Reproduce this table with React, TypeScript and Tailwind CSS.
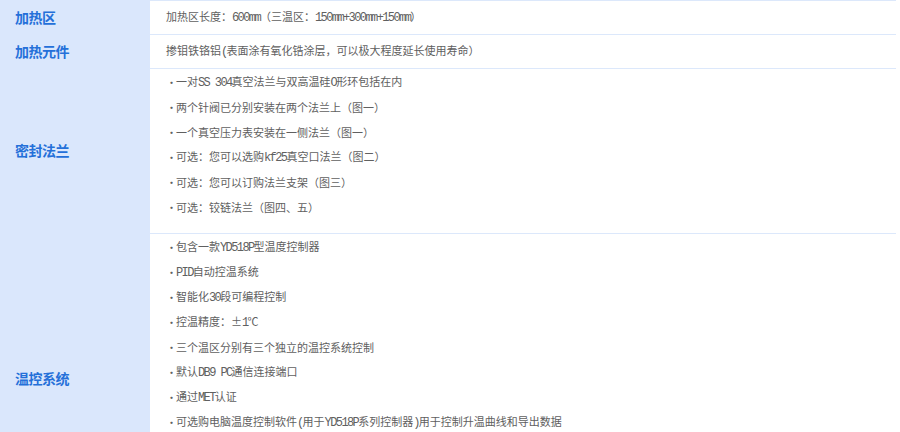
const rows: { label: string; items?: string[]; text?: string; minH?: string }[] = [
  { label: "加热区", text: "加热区长度：600mm（三温区：150mm+300mm+150mm）" },
  { label: "加热元件", text: "掺钼铁铬铝(表面涂有氧化锆涂层，可以极大程度延长使用寿命）" },
  {
    label: "密封法兰",
    items: [
      "一对SS 304真空法兰与双高温硅O形环包括在内",
      "两个针阀已分别安装在两个法兰上（图一）",
      "一个真空压力表安装在一侧法兰（图一）",
      "可选：您可以选购kf25真空口法兰（图二）",
      "可选：您可以订购法兰支架（图三）",
      "可选：铰链法兰（图四、五）",
    ],
  },
  {
    label: "温控系统",
    minH: "min-h-[290px]",
    items: [
      "包含一款YD518P型温度控制器",
      "PID自动控温系统",
      "智能化30段可编程控制",
      "控温精度：±1℃",
      "三个温区分别有三个独立的温控系统控制",
      "默认DB9 PC通信连接端口",
      "通过MET认证",
      "可选购电脑温度控制软件(用于YD518P系列控制器)用于控制升温曲线和导出数据",
    ],
  },
];

// latin runs are half-width in the original, so set them in a mono face
function Txt({ s }: { s: string }) {
  const parts = s.split(/([\x20-\x7e]+)/).filter(Boolean);
  return (
    <span className="leading-none whitespace-nowrap">
      {parts.map((p, i) =>
        /^[\x20-\x7e]+$/.test(p) ? (
          <span key={i} className="font-['Liberation_Mono',monospace] text-[12px] tracking-[-1.6px] whitespace-pre">
            {p}
          </span>
        ) : (
          <span key={i}>{p}</span>
        )
      )}
    </span>
  );
}

export default function App() {
  return (
    <div className="w-[900px] h-[432px] overflow-hidden bg-white font-['Noto_Sans_CJK_SC',sans-serif]">
      <div className="w-[896px]">
        {rows.map((row) => (
          <div key={row.label} className={`flex ${row.minH ?? ""}`}>
            <div className="w-[150px] shrink-0 bg-[#dae7fc] flex items-center pl-[15px]">
              <span className="text-[14px] font-bold text-[#2470d9] tracking-[-0.5px]">{row.label}</span>
            </div>
            <div className="flex-1 border-t border-[#dce8fb] pl-4">
              {row.text && (
                <p className="h-[33px] flex items-center text-[11px] text-[#606060]">
                  <Txt s={row.text} />
                </p>
              )}
              {row.items && (
                <ul className="pt-px pb-[13px]">
                  {row.items.map((it) => (
                    <li key={it} className="h-[25px] flex items-center text-[11px] text-[#606060]">
                      <span className="w-[10px] text-center leading-none">·</span>
                      <Txt s={it} />
                    </li>
                  ))}
                </ul>
              )}
            </div>
          </div>
        ))}
      </div>
    </div>
  );
}
